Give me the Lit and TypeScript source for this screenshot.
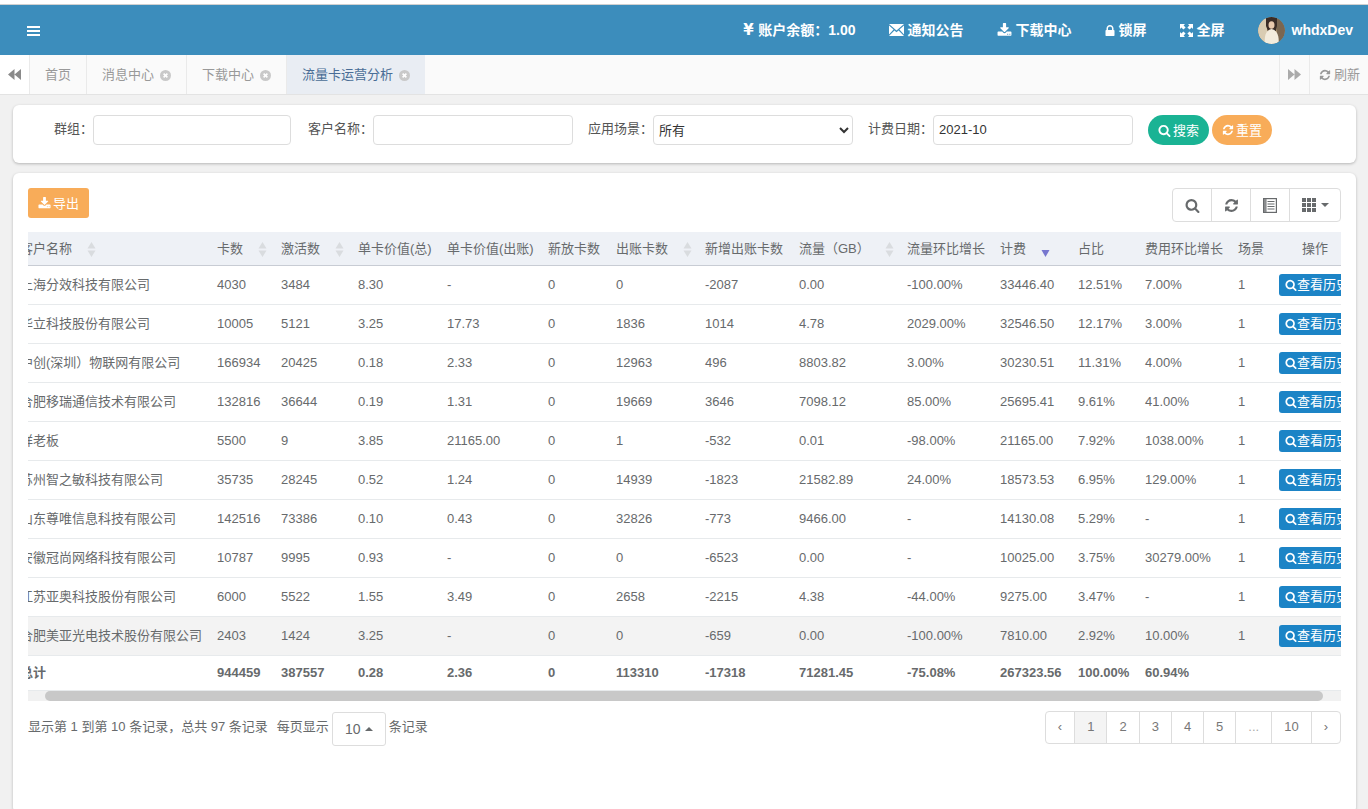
import { LitElement, html, css } from "lit";
import { customElement } from "lit/decorators.js";

const P = {
  search: "M1216 832q0-185-131.5-316.5t-316.5-131.5-316.5 131.5-131.5 316.5 131.5 316.5 316.5 131.5 316.5-131.5 131.5-316.5zm512 832q0 52-38 90t-90 38q-54 0-90-38l-343-342q-179 124-399 124-143 0-273.5-55.5t-225-150-150-225-55.5-273.5 55.5-273.5 150-225 225-150 273.5-55.5 273.5 55.5 225 150 150 225 55.5 273.5q0 220-124 399l343 343q37 37 37 90z",
  refresh: "M1639 1056q0 5-1 7-64 268-268 434.5t-478 166.5q-146 0-282.5-55t-243.5-157l-129 129q-19 19-45 19t-45-19-19-45v-448q0-26 19-45t45-19h448q26 0 45 19t19 45-19 45l-137 137q71 66 161 102t187 36q134 0 250-65t186-179q11-17 53-117 8-23 30-23h192q13 0 22.5 9.5t9.5 22.5zm25-800v448q0 26-19 45t-45 19h-448q-26 0-45-19t-19-45 19-45l138-138q-148-137-349-137-134 0-250 65t-186 179q-11 17-53 117-8 23-30 23h-199q-13 0-22.5-9.5t-9.5-22.5v-7q65-268 270-434.5t480-166.5q146 0 284 55.5t245 156.5l130-129q19-19 45-19t45 19 19 45z",
  download: "M1344 1344q0-26-19-45t-45-19-45 19-19 45 19 45 45 19 45-19 19-45zm256 0q0-26-19-45t-45-19-45 19-19 45 19 45 45 19 45-19 19-45zm128-224v320q0 40-28 68t-68 28h-1472q-40 0-68-28t-28-68v-320q0-40 28-68t68-28h465l135 136q58 56 136 56t136-56l136-136h464q40 0 68 28t28 68zm-325-569q17 41-14 70l-448 448q-18 19-45 19t-45-19l-448-448q-31-29-14-70 17-39 59-39h256v-448q0-26 19-45t45-19h256q26 0 45 19t19 45v448h256q42 0 59 39z",
  lock: "M640 768h512v-192q0-106-75-181t-181-75-181 75-75 181v192zm832 96v576q0 40-28 68t-68 28h-960q-40 0-68-28t-28-68v-576q0-40 28-68t68-28h32v-192q0-184 132-316t316-132 316 132 132 316v192h32q40 0 68 28t28 68z",
};

const fa = (d: string, size: number) => html`<svg class="ic" width=${size} height=${size} viewBox="0 0 1792 1792" fill="currentColor"><path d=${d}></path></svg>`;
const lockIc = html`<svg class="ic" width="10" height="11" viewBox="256 128 1280 1408" fill="currentColor"><path d=${P.lock}></path></svg>`;

const closeIc = html`<svg class="close" width="11" height="11" viewBox="0 0 11 11"><circle cx="5.5" cy="5.5" r="5.5" fill="#c9c9c9"></circle><path d="M3.6 3.6l3.8 3.8M7.4 3.6l-3.8 3.8" stroke="#fff" stroke-width="1.6"></path></svg>`;

const sortIc = html`<svg class="sort" width="9" height="15" viewBox="0 0 9 15"><path d="M4.5 0L8.5 6.5H.5zM4.5 15L.5 8.5h8z" fill="#d9dcdf"></path></svg>`;
const sortDown = html`<svg class="sort" width="9" height="15" viewBox="0 0 9 15"><path d="M.5 8h8l-4 7z" fill="#7777cf"></path></svg>`;

const envelope = html`<svg class="ic" width="15" height="12" viewBox="0 0 15 12" fill="#fff"><path d="M0 0h15L7.5 6.6zM0 1.6v9L4.6 5.6zM15 1.6v9L10.4 5.6zM5.4 6.4L7.5 8.2l2.1-1.8L15 12H0z"></path></svg>`;
const fullscreen = html`<svg class="ic" width="13" height="13" viewBox="0 0 13 13" fill="#fff"><path d="M0 0h5L3.6 1.4 5.6 3.4 3.4 5.6 1.4 3.6 0 5zM13 0v5l-1.4-1.4-2 2L7.4 3.4l2-2L8 0zM0 13V8l1.4 1.4 2-2 2.2 2.2-2 2L5 13zM13 13H8l1.4-1.4-2-2 2.2-2.2 2 2L13 8z"></path></svg>`;
const back = html`<svg width="13" height="11" viewBox="0 0 13 11" fill="#8a8a8a"><path d="M6.5 0v11L0 5.500zM13 0v11L6.5 5.500z"></path></svg>`;
const fwd = html`<svg width="13" height="11" viewBox="0 0 13 11" fill="#aaa"><path d="M0 0v11l6.500-5.500zM6.500 0v11L13 5.500z"></path></svg>`;
const listIc = html`<svg width="14" height="15" viewBox="0 0 14 15"><rect x=".6" y=".6" width="12.8" height="13.8" fill="none" stroke="#676a6c" stroke-width="1.2"></rect><path d="M1 1h2.600v13H1z" fill="#8a8c8e"></path><path d="M4.500 3.500h7M4.500 6h7M4.500 8.500h7M4.500 11h7" stroke="#676a6c" stroke-width="1.2"></path></svg>`;
const gridIc = html`<svg width="14" height="14" viewBox="0 0 14 14" fill="#676a6c"><path d="M0 0h4v4H0zM5 0h4v4H5zM10 0h4v4h-4zM0 5h4v4H0zM5 5h4v4H5zM10 5h4v4h-4zM0 10h4v4H0zM5 10h4v4H5zM10 10h4v4h-4z"></path></svg>`;

const avatar = html`<svg class="avatar" width="27" height="27" viewBox="0 0 27 27">
  <defs><clipPath id="av"><circle cx="13.5" cy="13.5" r="13.5"></circle></clipPath></defs>
  <g clip-path="url(#av)">
    <rect width="27" height="27" fill="#a8926f"></rect>
    <rect width="9" height="27" fill="#d9ccb2"></rect>
    <rect x="19" width="8" height="27" fill="#7a6650"></rect>
    <path d="M8 0h11v9l-1 5H10L8 9z" fill="#3a2c26"></path>
    <ellipse cx="13.500" cy="8" rx="3" ry="3.800" fill="#e8c9ad"></ellipse>
    <path d="M7 27c-1-8 1-14 6.500-15 5.500 1 8 7 7 15z" fill="#f3ecdd"></path>
  </g>
</svg>`;

type Row = string[];
const rows: Row[] = [
  ["上海分效科技有限公司","4030","3484","8.30","-","0","0","-2087","0.00","-100.00%","33446.40","12.51%","7.00%","1"],
  ["华立科技股份有限公司","10005","5121","3.25","17.73","0","1836","1014","4.78","2029.00%","32546.50","12.17%","3.00%","1"],
  ["中创(深圳）物联网有限公司","166934","20425","0.18","2.33","0","12963","496","8803.82","3.00%","30230.51","11.31%","4.00%","1"],
  ["合肥移瑞通信技术有限公司","132816","36644","0.19","1.31","0","19669","3646","7098.12","85.00%","25695.41","9.61%","41.00%","1"],
  ["祥老板","5500","9","3.85","21165.00","0","1","-532","0.01","-98.00%","21165.00","7.92%","1038.00%","1"],
  ["苏州智之敏科技有限公司","35735","28245","0.52","1.24","0","14939","-1823","21582.89","24.00%","18573.53","6.95%","129.00%","1"],
  ["山东尊唯信息科技有限公司","142516","73386","0.10","0.43","0","32826","-773","9466.00","-","14130.08","5.29%","-","1"],
  ["安徽冠尚网络科技有限公司","10787","9995","0.93","-","0","0","-6523","0.00","-","10025.00","3.75%","30279.00%","1"],
  ["江苏亚奥科技股份有限公司","6000","5522","1.55","3.49","0","2658","-2215","4.38","-44.00%","9275.00","3.47%","-","1"],
  ["合肥美亚光电技术股份有限公司","2403","1424","3.25","-","0","0","-659","0.00","-100.00%","7810.00","2.92%","10.00%","1"],
];
const total = ["总计","944459","387557","0.28","2.36","0","113310","-17318","71281.45","-75.08%","267323.56","100.00%","60.94%",""];
const widths = [197,64,77,89,101,68,89,94,108,93,78,67,93,41,92];
const heads: [string, any][] = [
  ["客户名称",sortIc],["卡数",sortIc],["激活数",sortIc],["单卡价值(总)",null],["单卡价值(出账)",null],["新放卡数",null],["出账卡数",sortIc],["新增出账卡数",null],["流量（GB）",sortIc],["流量环比增长",null],["计费",sortDown],["占比",null],["费用环比增长",null],["场景",null],
];
const pages = ["‹","1","2","3","4","5","...","10","›"];

@customElement("app-root")
export class AppRoot extends LitElement {
  static styles = css`
    :host { display: block; width: 100%; height: 809px; overflow: hidden; background: #f1f1f1;
      font-family: "Liberation Sans", "Noto Sans CJK SC", sans-serif; font-size: 13px; color: #676a6c; }
    .ic { flex: none; display: block; }
    .lift { padding-bottom: 2px; }
    .strip { height: 4px; background: #fff; border-bottom: 1px solid #d0d0d0; }
    .top { height: 50px; background: #3c8dbc; color: #fff; display: flex; align-items: center; justify-content: space-between; padding: 0 15px 0 27px; font-size: 14px; font-weight: 700; }
    .bars { width: 13px; height: 10px; margin-top: 1px; display: flex; flex-direction: column; justify-content: space-between; }
    .bars i { display: block; height: 2px; background: #fff; }
    .nav { display: flex; align-items: center; gap: 33px; }
    .nav-item { display: flex; align-items: center; gap: 4px; white-space: nowrap; }
    .yen { font-family: "DejaVu Sans", sans-serif; font-size: 15px; line-height: 1; width: 11px; }
    .user { display: flex; align-items: center; gap: 7px; }
    .avatar { display: block; border-radius: 50%; }
    .tabs { height: 39px; background: #fafafa; border-bottom: 1px solid #e3e3e3; display: flex; color: #999; }
    .tab { display: flex; align-items: center; justify-content: center; gap: 6px; padding: 0 15px; border-right: 1px solid #eaeaea; white-space: nowrap; }
    .tab .close { margin-top: 1px; }
    .tab.arrow { width: 30px; padding: 0; box-sizing: border-box; background: #fff; }
    .tab.active { background: #e9edf3; color: #4a6d96; border-right: none; width: 138px; box-sizing: border-box; padding: 0; }
    .spacer { flex: 1; }
    .tab.arrow.r { width: 31px; background: #fafafa; border-right: 1px solid #eaeaea; border-left: 1px solid #eaeaea; }
    .refresh { width: 58px; display: flex; align-items: center; gap: 3px; padding-left: 9px; box-sizing: border-box; }
    .card { background: #fff; border-radius: 6px; box-shadow: 0 1px 3px rgba(0,0,0,.25); }
    .form { margin: 10px 12px 0 13px; padding: 10px 0 18px 41px; display: flex; align-items: center; color: #555; }
    .field { display: flex; align-items: center; margin-right: 15px; white-space: nowrap; }
    .field.first { margin-right: 17px; }
    .field > span { padding-bottom: 5px; }
    input, select { box-sizing: border-box; height: 30px; width: 200px; border: 1px solid #ddd; border-radius: 4px; background: #fff; font: 13px "Liberation Sans", "Noto Sans CJK SC", sans-serif; color: #333; padding: 0 5px 2px; outline: none; }
    input.w198 { width: 198px; }
    select { padding: 0 0 0 1px; }
    .btn { display: inline-flex; align-items: center; justify-content: center; gap: 2px; height: 30px; color: #fff; border: none; font: 13px "Liberation Sans", "Noto Sans CJK SC", sans-serif; padding: 0; }
    .round { border-radius: 15px; }
    .green { background: #1ab394; width: 61px; margin-right: 3px; }
    .orange { background: #f8ac59; }
    .round.orange { width: 60px; }
    .panel { margin: 10px 12px 0 13px; padding: 15px 15px 0; height: 640px; box-sizing: border-box; }
    .toolbar { height: 44px; display: flex; justify-content: space-between; align-items: flex-start; }
    .export { width: 61px; border-radius: 3px; gap: 2px; }
    .group { display: flex; height: 34px; box-sizing: border-box; border: 1px solid #ddd; border-radius: 4px; color: #676a6c; }
    .group div { width: 38px; display: flex; align-items: center; justify-content: center; border-right: 1px solid #ddd; gap: 5px; }
    .group div:last-child { width: 50px; border-right: none; }
    .caret { width: 0; height: 0; border-left: 4px solid transparent; border-right: 4px solid transparent; border-top: 4px solid #676a6c; }
    .wrap { overflow: hidden; }
    table { table-layout: fixed; width: 1351px; margin-left: -18px; border-collapse: separate; border-spacing: 0; }
    th, td { box-sizing: border-box; padding: 0 0 2px 10px; text-align: left; white-space: nowrap; overflow: hidden; font-weight: 400; }
    th { height: 34px; background: #eef1f6; border-bottom: 1px solid #c8ccd4; padding-bottom: 3px; }
    th.c { text-align: center; padding-left: 0; }
    td { height: 39px; border-bottom: 1px solid #e7eaec; }
    td:first-child { padding-bottom: 4px; }
    tr.hl td { background: #f3f3f3; }
    tr.sum td { height: 34px; border-bottom: none; font-weight: 700; }
    .sort { margin-left: 15px; vertical-align: -4px; }
    .op { display: inline-flex; align-items: center; gap: 0; height: 22px; padding: 0 5px 0 6px; border-radius: 3px 0 0 3px; background: #1c84c6; color: #fff; margin-top: 1px; vertical-align: middle; }
    .track { height: 11px; background: #f1f1f1; border-top: 1px solid #e7eaec; box-sizing: border-box; padding: 0 18px 0 17px; }
    .thumb { height: 10px; background: #c8c8c8; border-radius: 5px; }
    .foot { margin-top: 10px; display: flex; justify-content: space-between; align-items: flex-start; }
    .info { display: flex; align-items: center; height: 36px; white-space: nowrap; }
    .info > span.t { padding-bottom: 8px; }
    .info > span.t.per { margin-left: 9px; }
    .size { margin: 0 3px; box-sizing: border-box; width: 54px; height: 34px; border: 1px solid #ddd; border-radius: 3px; display: flex; align-items: center; justify-content: center; gap: 4px; font-size: 14px; color: #676a6c; }
    .up { width: 0; height: 0; border-left: 4px solid transparent; border-right: 4px solid transparent; border-bottom: 4px solid #676a6c; }
    .pager { display: flex; height: 33px; box-sizing: border-box; border: 1px solid #ddd; border-radius: 4px; color: #777; }
    .pager span { padding: 0 12px 2px; display: flex; align-items: center; border-right: 1px solid #ddd; }
    .pager span:last-child { border-right: none; }
    .pager .on { background: #f4f4f4; }
    .pager .dim { color: #aaa; }
  `;

  render() {
    return html`
      <div class="strip"></div>
      <header class="top">
        <div class="bars"><i></i><i></i><i></i></div>
        <nav class="nav">
          <div class="nav-item"><span class="yen">¥</span><span class="lift">账户余额：1.00</span></div>
          <div class="nav-item">${envelope}<span class="lift">通知公告</span></div>
          <div class="nav-item">${fa(P.download, 15)}<span class="lift">下载中心</span></div>
          <div class="nav-item">${lockIc}<span class="lift">锁屏</span></div>
          <div class="nav-item">${fullscreen}<span class="lift">全屏</span></div>
          <div class="user">${avatar}<span>whdxDev</span></div>
        </nav>
      </header>
      <div class="tabs">
        <div class="tab arrow">${back}</div>
        <div class="tab"><span class="lift">首页</span></div>
        <div class="tab"><span class="lift">消息中心</span>${closeIc}</div>
        <div class="tab"><span class="lift">下载中心</span>${closeIc}</div>
        <div class="tab active"><span class="lift">流量卡运营分析</span>${closeIc}</div>
        <div class="spacer"></div>
        <div class="tab arrow r">${fwd}</div>
        <div class="refresh">${fa(P.refresh, 12)}<span class="lift">刷新</span></div>
      </div>
      <section class="card form">
        <label class="field first"><span>群组：</span><input class="w198" /></label>
        <label class="field"><span>客户名称：</span><input /></label>
        <label class="field"><span>应用场景：</span><select><option>所有</option></select></label>
        <label class="field"><span>计费日期：</span><input value="2021-10" /></label>
        <button class="btn round green">${fa(P.search, 13)}<span class="lift">搜索</span></button>
        <button class="btn round orange">${fa(P.refresh, 12)}<span class="lift">重置</span></button>
      </section>
      <section class="card panel">
        <div class="toolbar">
          <button class="btn orange export">${fa(P.download, 13)}<span class="lift">导出</span></button>
          <div class="group">
            <div>${fa(P.search, 15)}</div>
            <div>${fa(P.refresh, 15)}</div>
            <div>${listIc}</div>
            <div>${gridIc}<span class="caret"></span></div>
          </div>
        </div>
        <div class="wrap">
          <table>
            <colgroup>${widths.map((w) => html`<col style="width:${w}px" />`)}</colgroup>
            <thead><tr>
              ${heads.map(([t, ic]) => html`<th>${t}${ic}</th>`)}
              <th class="c">操作</th>
            </tr></thead>
            <tbody>
              ${rows.map((r, i) => html`<tr class=${i === 9 ? "hl" : ""}>
                ${r.map((c) => html`<td>${c}</td>`)}
                <td><span class="op">${fa(P.search, 12)}<span class="lift">查看历史记录</span></span></td>
              </tr>`)}
              <tr class="sum">${total.map((c) => html`<td>${c}</td>`)}<td></td></tr>
            </tbody>
          </table>
        </div>
        <div class="track"><div class="thumb"></div></div>
        <div class="foot">
          <div class="info">
            <span class="t">显示第 1 到第 10 条记录，总共 97 条记录</span>
            <span class="t per">每页显示</span>
            <span class="size">10<span class="up"></span></span>
            <span class="t">条记录</span>
          </div>
          <div class="pager">
            ${pages.map((p) => html`<span class=${p === "1" ? "on" : p === "..." ? "dim" : ""}>${p}</span>`)}
          </div>
        </div>
      </section>
    `;
  }
}
